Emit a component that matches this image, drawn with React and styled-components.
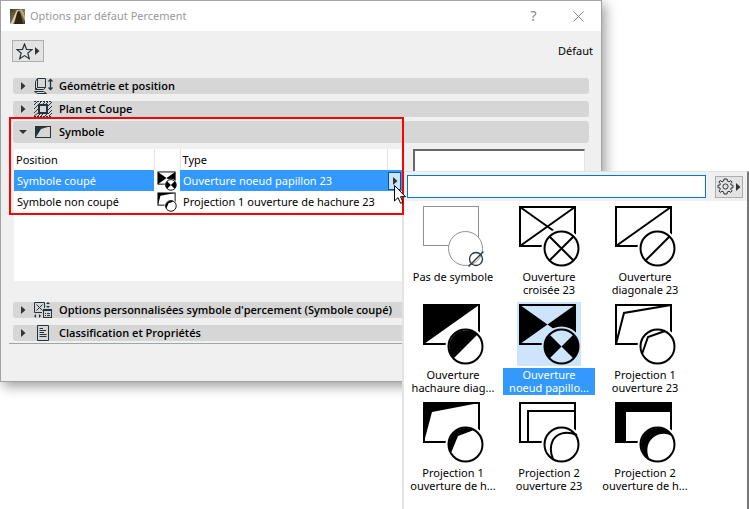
import React, { useState } from 'react'
import styled, { createGlobalStyle, css } from 'styled-components'

const symbols = [
  { id: 'none', label: 'Pas de symbole' },
  { id: 'cross', label: 'Ouverture\ncroisée 23' },
  { id: 'diagonal', label: 'Ouverture\ndiagonale 23' },
  { id: 'diagonalFill', label: 'Ouverture\nhachaure diag...' },
  { id: 'bowtie', label: 'Ouverture\nnoeud papillo...' },
  { id: 'proj1', label: 'Projection 1\nouverture 23' },
  { id: 'proj1Fill', label: 'Projection 1\nouverture de h...' },
  { id: 'proj2', label: 'Projection 2\nouverture 23' },
  { id: 'proj2Fill', label: 'Projection 2\nouverture de h...' },
]

const rows = [
  { position: 'Symbole coupé', symbol: 'bowtie', type: 'Ouverture noeud papillon 23' },
  { position: 'Symbole non coupé', symbol: 'proj1Fill', type: 'Projection 1 ouverture de hachure 23' },
]

// what is drawn in the rectangle and in the circle of each symbol
const rectShapes = {
  cross: <path d="M3 3 L58 42 M58 3 L3 42" fill="none" />,
  diagonal: <path d="M58 3 L3 42" fill="none" />,
  diagonalFill: <path d="M3 3 H58 L3 42 Z" stroke="none" />,
  bowtie: <path d="M3 3 L30.5 22.5 L3 42 Z M58 3 L30.5 22.5 L58 42 Z" stroke="none" />,
  proj1: <path d="M58 3 L11 11 L3 42" fill="none" />,
  proj1Fill: <path d="M3 3 H58 L11 12 L3 42 Z" stroke="none" />,
  proj2: <path d="M58 11 H11 V42" fill="none" />,
  proj2Fill: <path d="M3 3 H58 V12 H13 V42 H3 Z" stroke="none" />,
}

const circleShapes = {
  cross: <path d="M32.5 32.5 L56.5 56.5 M56.5 32.5 L32.5 56.5" fill="none" />,
  diagonal: <path d="M56.5 32.5 L32.5 56.5" fill="none" />,
  diagonalFill: <path d="M56.5 32.5 L32.5 56.5 A17 17 0 0 1 56.5 32.5 Z" stroke="none" />,
  bowtie: (
    <path
      d="M44.5 44.5 L32.5 32.5 A17 17 0 0 0 32.5 56.5 Z M44.5 44.5 L56.5 32.5 A17 17 0 0 1 56.5 56.5 Z"
      stroke="none"
    />
  ),
  proj1: <path d="M52 29 L35 35 L29 52" fill="none" />,
  proj1Fill: <path d="M53 30 L37 36 L30 53 A17 17 0 0 1 53 30 Z" stroke="none" />,
  proj2: <path d="M60 35 C48 30 40 34 36 40 C33 46 33 52 36 59" fill="none" />,
  proj2Fill: <path d="M60 37 C52 31 42 34 37 41 C33 47 34 55 37 60 A17 17 0 1 1 60 37 Z" stroke="none" />,
}

const SymbolIcon = ({ kind, size = 64 }) => {
  const maskId = `cut-${kind}-${size}`
  const empty = kind === 'none'
  const color = empty ? '#8c9396' : '#000'
  return (
    <svg width={size} height={size} viewBox="0 0 64 64" aria-hidden="true">
      <mask id={maskId} maskUnits="userSpaceOnUse" x="0" y="0" width="64" height="64">
        <rect width="64" height="64" fill="#fff" />
        <circle cx="44.5" cy="44.5" r={empty ? 17 : 20} fill="#000" />
      </mask>
      <g stroke={color} fill={color} strokeWidth={empty ? 1 : size < 64 ? 3 : 2}>
        <g mask={`url(#${maskId})`}>
          {empty
            ? <rect x="2.5" y="2.5" width="55" height="39" fill="none" />
            : <rect x="3" y="3" width="55" height="39" fill="none" />}
          {rectShapes[kind]}
        </g>
        {circleShapes[kind]}
        <circle cx="44.5" cy="44.5" r="17" fill="none" />
      </g>
      {empty && (
        <g stroke="#27333b" strokeWidth="1.3" fill="none">
          <circle cx="55" cy="55" r="6.5" />
          <path d="M47.5 62.5 L62.5 47.5" />
        </g>
      )}
    </svg>
  )
}

const Arrow = ({ down }) => (
  <svg width="8" height="8" viewBox="0 0 8 8" aria-hidden="true">
    <path d={down ? 'M0 2 H8 L4 6 Z' : 'M2 0 L6.5 4 L2 8 Z'} fill="#333" />
  </svg>
)

const SectionIcon = ({ kind }) => (
  <svg width="20" height="16" viewBox="0 0 20 16" overflow="visible" fill="none" stroke="#27333b" aria-hidden="true">
    {kind === 'geometry' && (
      <g>
        <path d="M4.5 .5 H12.5 V9.5 H4.5 Z M2.5 3.5 V11.5 H10.5 M2.5 3.5 L4.5 .5 M2.5 11.5 L4.5 9.5 M10.5 11.5 L12.5 9.5 M1.5 13.5 H10.5 L13.5 15.5 H4.5 Z" />
        <path d="M17.5 2 V11 M15.5 3.5 L17.5 1.5 L19.5 3.5 M15.5 9.5 L17.5 11.5 L19.5 9.5" strokeWidth="1.3" />
      </g>
    )}
    {kind === 'plan' && (
      <g>
        <path d="M1 4 L4 1 M1 8 L5 4 M1 12 L5 8 M1 15 L5 12 M5 4 L8 1 M9 4 L12 1 M12 4 L15 1 M15 5 L19 1 M15 9 L19 5 M15 13 L19 9 M16 15 L19 12 M5 15 L7 13 M8 15 L10 13 M12 15 L14 13" />
        <rect x="6" y="4" width="8" height="8" strokeWidth="2" fill="#d6d6d6" />
        <path d="M1 .5 H19 M1 15.5 H19" strokeDasharray="2 1" />
      </g>
    )}
    {kind === 'symbol' && (
      <g>
        <rect x="2.5" y="2.5" width="15" height="11" />
        <path d="M2 2 H18 L8 5 L3 13 H2 Z" fill="#27333b" stroke="none" />
      </g>
    )}
    {kind === 'options' && (
      <g>
        <path d="M9 10.5 H1.5 V.5 H11.5 V6 M3.5 2.5 L9.5 8.5 M9.5 2.5 L3.5 8.5" />
        <rect x="10.5" y="7.5" width="8" height="8" />
        <path d="M10 8.5 H19 M12 11.5 H13 M14 11.5 H17 M12 13.5 H13 M14 13.5 H17" />
        <path d="M13 2 L15 0 L17 2 Z M13 4 L15 6 L17 4 Z M3 12 L1 14 L3 16 Z M6 12 L8 14 L6 16 Z" fill="#27333b" stroke="none" />
      </g>
    )}
    {kind === 'properties' && (
      <path d="M4.5 .5 H15.5 V15.5 H4.5 Z M6.5 3.5 H10 M6.5 5.5 H13 M6.5 7.5 H11 M6.5 9.5 H13.5 M6.5 11.5 H13.5" />
    )}
  </svg>
)

const AppLogo = () => (
  <svg width="15" height="15" viewBox="0 0 15 15" aria-hidden="true">
    <defs>
      <linearGradient id="logoBg" x1="0" y1="0" x2="1" y2="1">
        <stop offset="0" stopColor="#4b3b20" />
        <stop offset=".6" stopColor="#8d7d5c" />
        <stop offset="1" stopColor="#4a3d25" />
      </linearGradient>
    </defs>
    <rect width="15" height="15" fill="url(#logoBg)" />
    <path d="M0 15 C3 12 4 6 7 1 L9 1 C6 6 5 12 3 15 Z" fill="#d9cfb4" />
    <path d="M4 15 C6 11 6 5 8 2 C11 3 12 9 13 15 Z" fill="#30240f" />
    <path d="M9 1 C12 3 13 8 15 12 V8 C14 4 13 2 11 0 Z" fill="#b8aa88" />
  </svg>
)

const StarIcon = () => (
  <svg width="17" height="17" viewBox="0 0 17 17" aria-hidden="true">
    <path d="M8.5 1 L10.5 6.3 L16 6.6 L11.8 10 L13.3 15.7 L8.5 12.6 L3.7 15.7 L5.2 10 L1 6.6 L6.5 6.3 Z" fill="none" stroke="#27333b" strokeWidth="1.2" />
  </svg>
)

const GearIcon = () => (
  <svg width="17" height="17" viewBox="0 0 17 17" aria-hidden="true" fill="none" stroke="#27333b">
    <path d="M7 1 H10 L10.4 3.1 L12 3.8 L13.8 2.6 L15 4.2 L13.7 5.8 L14 7 L16 7.3 V9.7 L14 10 L13.7 11.2 L15 12.8 L13.8 14.4 L12 13.2 L10.4 13.9 L10 16 H7 L6.6 13.9 L5 13.2 L3.2 14.4 L2 12.8 L3.3 11.2 L3 10 L1 9.7 V7.3 L3 7 L3.3 5.8 L2 4.2 L3.2 2.6 L5 3.8 L6.6 3.1 Z" />
    <circle cx="8.5" cy="8.5" r="2.6" />
  </svg>
)

const Section = ({ icon, title, open, onClick }) => (
  <SectionBar type="button" $open={open} aria-expanded={!!open} onClick={onClick}>
    <Arrow down={open} />
    <SectionIcon kind={icon} />
    {title}
  </SectionBar>
)

const App = () => {
  const [selected, setSelected] = useState('bowtie')
  const [search, setSearch] = useState('')

  return (
    <Page>
      <GlobalStyle />
      <Dialog>
        <TitleBar>
          <AppLogo />
          <Title>Options par défaut Percement</Title>
          <TitleButton type="button">?</TitleButton>
          <TitleButton type="button" aria-label="Fermer">
            <svg width="11" height="11" viewBox="0 0 11 11">
              <path d="M.5 .5 L10.5 10.5 M10.5 .5 L.5 10.5" stroke="#888" />
            </svg>
          </TitleButton>
        </TitleBar>
        <Toolbar>
          <ToolButton type="button" $width={32} aria-label="Favoris">
            <StarIcon />
            <Arrow />
          </ToolButton>
          <span>Défaut</span>
        </Toolbar>
        <Sections>
          <Section icon="geometry" title="Géométrie et position" />
          <Section icon="plan" title="Plan et Coupe" />
          <Section icon="symbol" title="Symbole" open />
          <Panel>
            <List>
              <Table>
                <colgroup>
                  <col style={{ width: 140 }} />
                  <col style={{ width: 26 }} />
                  <col />
                  <col style={{ width: 15 }} />
                </colgroup>
                <thead>
                  <tr>
                    <HeadCell>Position</HeadCell>
                    <HeadCell />
                    <HeadCell>Type</HeadCell>
                    <HeadCell />
                  </tr>
                </thead>
                <tbody>
                  {rows.map((row, i) => (
                    <Row key={row.position} $active={i === 0}>
                      <Cell>{row.position}</Cell>
                      <IconCell>
                        <SymbolIcon kind={row.symbol} size={20} />
                      </IconCell>
                      <Cell>{row.type}</Cell>
                      <Cell $tight>
                        {i === 0 && (
                          <OpenButton type="button" aria-label="Choisir">
                            <Arrow />
                          </OpenButton>
                        )}
                      </Cell>
                    </Row>
                  ))}
                </tbody>
              </Table>
            </List>
            <Preview />
          </Panel>
          <Section icon="options" title="Options personnalisées symbole d'percement (Symbole coupé)" />
          <Section icon="properties" title="Classification et Propriétés" />
        </Sections>
        <Footer />
      </Dialog>

      <Popup>
        <SearchBar>
          <SearchInput
            type="text"
            aria-label="Rechercher"
            value={search}
            onChange={(e) => setSearch(e.target.value)}
          />
          <ToolButton type="button" $width={28} aria-label="Réglages">
            <GearIcon />
            <Arrow />
          </ToolButton>
        </SearchBar>
        <SymbolGrid>
          {symbols.map((s) => (
            <SymbolItem key={s.id} type="button" onClick={() => setSelected(s.id)}>
              <Thumb $active={selected === s.id}>
                <SymbolIcon kind={s.id} />
              </Thumb>
              <SymbolLabel $active={selected === s.id}>{s.label}</SymbolLabel>
            </SymbolItem>
          ))}
        </SymbolGrid>
      </Popup>

      <Highlight />
      <Cursor width="12" height="19" viewBox="0 0 12 19" aria-hidden="true">
        <path d="M.5 .5 V16 L4 12.6 L6.6 18.3 L9 17.2 L6.5 11.7 H11.5 Z" fill="#fff" stroke="#000" />
      </Cursor>
    </Page>
  )
}

export default App

const GlobalStyle = createGlobalStyle`
  * {
    box-sizing: border-box;
  }
  body {
    margin: 0;
    background: #fff;
    color: #000;
    font: 11px/16px 'Noto Sans', 'Open Sans', sans-serif;
    overflow: hidden;
  }
  button, input {
    font: inherit;
    color: inherit;
    margin: 0;
    padding: 0;
  }
  svg {
    display: block;
    flex: none;
  }
`;
const Page = styled.div`
  position: relative;
  min-height: 100vh;
`;
const Dialog = styled.div`
  width: calc(100% - 147px);
  background: #f0f0f0;
  border: 1px solid #a3a3a3;
  box-shadow: 3px 4px 12px rgba(0, 0, 0, 0.4);
`;
const TitleBar = styled.div`
  display: flex;
  align-items: center;
  height: 30px;
  padding-left: 9px;
  background: #fff;
`;
const Title = styled.div`
  flex: 1;
  padding-left: 5px;
  color: #999;
`;
const TitleButton = styled.button`
  display: flex;
  align-items: center;
  justify-content: center;
  width: 45px;
  height: 28px;
  border: 0;
  background: none;
  color: #888;
  font-size: 14px;
`;
const Toolbar = styled.div`
  display: flex;
  align-items: center;
  justify-content: space-between;
  padding: 9px 8px 0 11px;
`;
const ToolButton = styled.button`
  display: flex;
  align-items: center;
  justify-content: center;
  flex: none;
  width: ${(p) => p.$width}px;
  height: 22px;
  border: 1px solid #adadad;
  background: #e3e3e3;
`;
const Sections = styled.div`
  padding: 16px 12px 0;
`;
const SectionBar = styled.button`
  display: flex;
  align-items: center;
  width: 100%;
  height: 16px;
  margin-bottom: 7px;
  padding-left: 6px;
  border: 0;
  border-radius: 3px;
  background: #d6d6d6;
  font-family: 'Open Sans', 'Noto Sans', sans-serif;
  font-weight: 600;
  white-space: nowrap;

  svg + svg {
    margin: 0 6px;
  }

  ${(p) => p.$open && css`
    height: 22px;
    margin: -3px 0 6px;
  `}
`;
const Panel = styled.div`
  display: flex;
  gap: 11px;
  height: 132px;
  margin-bottom: 21px;
  padding: 0 4px 0 1px;
`;
const List = styled.div`
  width: 388px;
  background: #fff;
`;
const Table = styled.table`
  width: 100%;
  table-layout: fixed;
  border-collapse: collapse;
`;
const HeadCell = styled.th`
  height: 21px;
  padding: 0 2px;
  font-weight: normal;
  text-align: left;

  & + & {
    border-left: 1px solid #e3e3e3;
  }
`;
const Row = styled.tr`
  ${(p) => p.$active && css`
    background: #3399ff;
    color: #fff;
  `}
`;
const Cell = styled.td`
  height: 21px;
  padding: ${(p) => (p.$tight ? '0 1px' : '0 3px')};
  white-space: nowrap;
`;
const IconCell = styled.td`
  padding: 0 3px;
  background: #fff;
`;
const OpenButton = styled.button`
  display: flex;
  align-items: center;
  justify-content: center;
  width: 13px;
  height: 18px;
  border: 1px solid #005499;
  background: #cce4f7;
`;
const Preview = styled.div`
  flex: 1;
  border: 1px solid #e3e3e3;
  border-top: 2px solid #696969;
  border-left: 2px solid #696969;
  background: #fff;
`;
const Footer = styled.div`
  height: 38px;
  margin: -5px 8px 0;
  border-top: 1px solid #a0a5a6;
`;
const Popup = styled.div`
  position: absolute;
  top: 171px;
  right: 0;
  bottom: 0;
  left: 402px;
  border: 2px solid #e3e3e3;
  border-top-width: 1px;
  border-right-color: #777;
  border-bottom: 0;
  background: #fff;
`;
const SearchBar = styled.div`
  display: flex;
  align-items: center;
  gap: 9px;
  height: 29px;
  padding: 0 4px 0 3px;
  background: #f0f0f0;
`;
const SearchInput = styled.input`
  flex: 1;
  min-width: 0;
  height: 23px;
  padding: 0 4px;
  border: 1px solid #0078d7;
  background: #fff;
  outline: none;
`;
const SymbolGrid = styled.div`
  display: grid;
  grid-template-columns: repeat(auto-fill, 92px);
  gap: 5px 4px;
  padding: 3px 0 0 3px;
`;
const SymbolItem = styled.button`
  display: flex;
  flex-direction: column;
  align-items: center;
  gap: 2px;
  border: 0;
  background: none;
`;
const Thumb = styled.span`
  background: ${(p) => (p.$active ? '#cce4fc' : 'none')};
`;
const SymbolLabel = styled.span`
  width: 100%;
  height: 27px;
  line-height: 13px;
  text-align: center;
  white-space: pre;
  background: ${(p) => (p.$active ? '#3399ff' : 'none')};
  color: ${(p) => (p.$active ? '#fff' : '#000')};
`;
const Highlight = styled.div`
  position: absolute;
  top: 117px;
  left: 9px;
  width: 395px;
  height: 98px;
  border: 2px solid #f00;
  pointer-events: none;
`;
const Cursor = styled.svg`
  position: absolute;
  top: 185px;
  left: 394px;
  pointer-events: none;
`;
